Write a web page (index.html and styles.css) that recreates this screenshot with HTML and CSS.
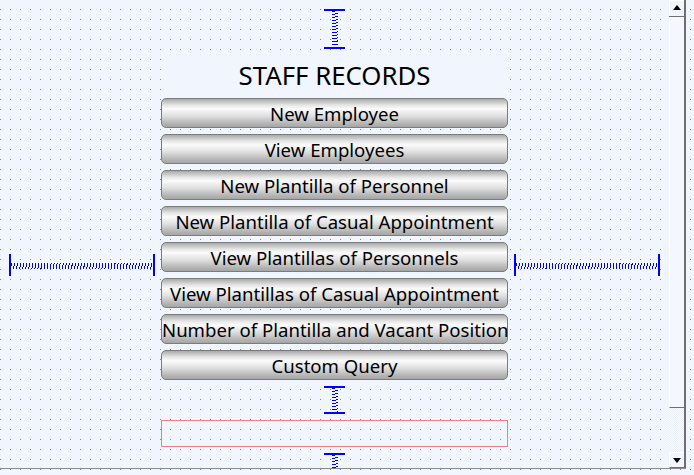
FILE: index.html
```html
<!DOCTYPE html>
<html>
<head>
<meta charset="utf-8">
<link rel="stylesheet" href="styles.css">
</head>
<body>
<div class="frame">
  <div class="canvas">
    <div class="side">
      <div class="hspring"><div class="coil-h"></div></div>
    </div>
    <div class="center">
      <div class="vspring top"><div class="coil-v"></div></div>
      <div class="title">STAFF RECORDS</div>
      <button class="btn">New Employee</button>
      <button class="btn">View Employees</button>
      <button class="btn">New Plantilla of Personnel</button>
      <button class="btn">New Plantilla of Casual Appointment</button>
      <button class="btn">View Plantillas of Personnels</button>
      <button class="btn">View Plantillas of Casual Appointment</button>
      <button class="btn">Number of Plantilla and Vacant Position</button>
      <button class="btn">Custom Query</button>
      <div class="vspring mid"><div class="coil-v"></div></div>
      <div class="redbox"></div>
      <div class="vspring low"><div class="coil-v"></div></div>
    </div>
    <div class="side">
      <div class="hspring"><div class="coil-h"></div></div>
    </div>
  </div>
  <div class="scrollbar">
    <div class="sb-btn up"><span class="tri-up"></span></div>
    <div class="sb-thumb"></div>
    <div class="sb-track"></div>
    <div class="sb-btn down"><span class="tri-down"></span></div>
  </div>
</div>
</body>
</html>
```
FILE: styles.css
```css
html, body {
  margin: 0;
  padding: 0;
}
body {
  width: 694px;
  height: 475px;
  overflow: hidden;
  background-color: #f1f5fd;
  background-image: radial-gradient(circle at 0.5px 0.5px, #80848c 0.7px, transparent 0.85px);
  background-size: 10px 10px;
  background-position: 0 9px;
  font-family: "Noto Sans", "Open Sans", sans-serif;
}
.frame {
  display: flex;
  width: 686px;
  height: 469px;
  box-sizing: border-box;
  border-bottom: 1px solid #8a8a8a;
  overflow: hidden;
}
.canvas {
  flex: 1;
  display: flex;
  align-items: flex-start;
  padding: 0 9px;
  gap: 6px;
  overflow: hidden;
}
.side {
  width: 146px;
  flex: none;
  padding-top: 254px;
}
.hspring {
  height: 22px;
  box-sizing: border-box;
  border-left: 2px solid #0000ff;
  border-right: 2px solid #0000ff;
  display: flex;
  align-items: center;
}
.coil-h {
  flex: 1;
  height: 6px;
  margin-top: 1px;
  background-image: repeating-linear-gradient(100deg, #0000ff 0 1px, transparent 1px 3px);
}
.center {
  width: 347px;
  flex: none;
  display: flex;
  flex-direction: column;
  padding-top: 9px;
}
.vspring {
  width: 21px;
  align-self: center;
  box-sizing: border-box;
  border-top: 2px solid #0000ff;
  border-bottom: 2px solid #0000ff;
  display: flex;
  justify-content: center;
}
.vspring.top { height: 40px; }
.vspring.mid { height: 28px; margin-top: 6px; }
.vspring.low { height: 28px; margin-top: 6px; }
.coil-v {
  width: 6px;
  margin-left: 1px;
  background-image: repeating-linear-gradient(170deg, #0000ff 0 1px, transparent 1px 3px);
}
.title {
  margin-top: 6px;
  height: 43px;
  background: #f1f5fd;
  font-size: 25.8px;
  line-height: 41px;
  text-align: center;
  color: #000;
}
.btn {
  height: 30px;
  margin: 0 0 6px 0;
  padding: 2px 0 0 0;
  box-sizing: border-box;
  border: 1px solid #7c7c7c;
  border-radius: 5px;
  background: linear-gradient(#a9a9a9 0%, #e6e6e6 22%, #fbfbfb 35%, #e0e0e0 60%, #b4b4b4 88%, #a5a5a5 100%);
  font-family: "Noto Sans", "Open Sans", sans-serif;
  font-size: 18.6px;
  line-height: 26px;
  color: #000;
  text-align: center;
  white-space: nowrap;
}
.btn:last-of-type { margin-bottom: 0; }
.redbox {
  margin-top: 6px;
  height: 27px;
  box-sizing: border-box;
  border: 1px solid #f08080;
}
.scrollbar {
  width: 17px;
  flex: none;
  display: flex;
  flex-direction: column;
  box-sizing: border-box;
  border-right: 2px solid #6f6f6f;
  box-shadow: inset -1px 0 0 #a8a8a8;
}
.sb-btn {
  height: 17px;
  flex: none;
  box-sizing: border-box;
  background: #f1f5fd;
  display: flex;
  align-items: center;
  justify-content: center;
}
.sb-btn.up {
  border-bottom: 1px solid #6f6f6f;
  box-shadow: inset 1px 1px 0 #ffffff;
}
.sb-btn.down {
  height: 16px;
  border-top: 1px solid #ffffff;
  border-left: 1px solid #ffffff;
  border-bottom: 1px solid #6f6f6f;
}
.tri-up {
  width: 0;
  height: 0;
  border-left: 4px solid transparent;
  border-right: 4px solid transparent;
  border-bottom: 5px solid #000;
  margin-top: -2px;
}
.tri-down {
  width: 0;
  height: 0;
  border-left: 4px solid transparent;
  border-right: 4px solid transparent;
  border-top: 5px solid #000;
}
.sb-thumb {
  height: 391px;
  flex: none;
  box-sizing: border-box;
  background: #f4f7fe;
  border-left: 1px solid #ffffff;
  border-bottom: 1px solid #6f6f6f;
}
.sb-track {
  flex: 1;
  background-color: #f6f8fd;
  background-image: repeating-conic-gradient(#e9edf6 0 25%, #fbfcff 0 50%);
  background-size: 2px 2px;
}
```
